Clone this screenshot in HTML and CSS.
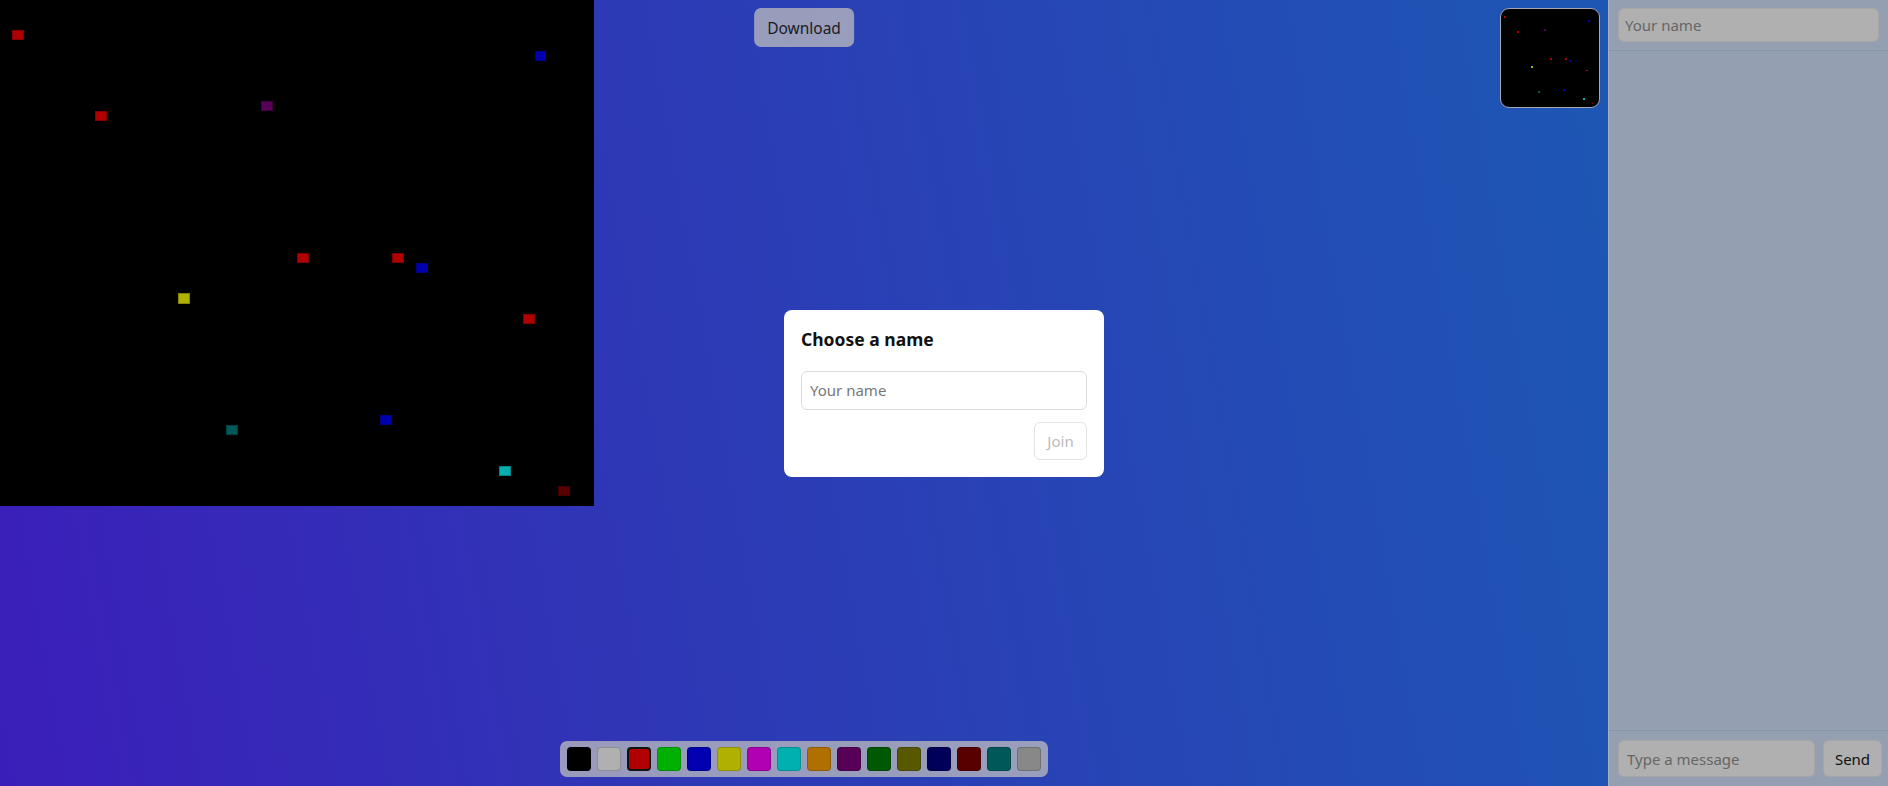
FILE: index.html
```html
<!DOCTYPE html>
<html lang="en">
<head>
<meta charset="utf-8">
<title>Pixel board</title>
<link rel="stylesheet" href="styles.css">
</head>
<body>
<div class="app">
  <main class="stage">
    <div class="board">
      <span class="px red" style="grid-area: 4 / 2"></span>
      <span class="px blue" style="grid-area: 6 / 46"></span>
      <span class="px purple" style="grid-area: 11 / 23"></span>
      <span class="px red" style="grid-area: 12 / 9"></span>
      <span class="px red" style="grid-area: 26 / 26"></span>
      <span class="px red" style="grid-area: 26 / 34"></span>
      <span class="px blue" style="grid-area: 27 / 36"></span>
      <span class="px yellow" style="grid-area: 30 / 16"></span>
      <span class="px red" style="grid-area: 32 / 45"></span>
      <span class="px teal" style="grid-area: 43 / 20"></span>
      <span class="px blue" style="grid-area: 42 / 33"></span>
      <span class="px cyan" style="grid-area: 47 / 43"></span>
      <span class="px maroon" style="grid-area: 49 / 48"></span>
    </div>

    <button class="download" type="button">Download</button>

    <div class="minimap">
      <span class="dot red" style="grid-area: 4 / 2"></span>
      <span class="dot blue" style="grid-area: 6 / 46"></span>
      <span class="dot purple" style="grid-area: 11 / 23"></span>
      <span class="dot red" style="grid-area: 12 / 9"></span>
      <span class="dot red" style="grid-area: 26 / 26"></span>
      <span class="dot red" style="grid-area: 26 / 34"></span>
      <span class="dot blue" style="grid-area: 27 / 36"></span>
      <span class="dot yellow" style="grid-area: 30 / 16"></span>
      <span class="dot red" style="grid-area: 32 / 45"></span>
      <span class="dot teal" style="grid-area: 43 / 20"></span>
      <span class="dot blue" style="grid-area: 42 / 33"></span>
      <span class="dot cyan" style="grid-area: 47 / 43"></span>
      <span class="dot maroon" style="grid-area: 49 / 48"></span>
    </div>

    <div class="palette">
      <button class="swatch black" type="button"></button>
      <button class="swatch silver" type="button"></button>
      <button class="swatch red selected" type="button"></button>
      <button class="swatch green" type="button"></button>
      <button class="swatch blue" type="button"></button>
      <button class="swatch yellow" type="button"></button>
      <button class="swatch magenta" type="button"></button>
      <button class="swatch cyan" type="button"></button>
      <button class="swatch orange" type="button"></button>
      <button class="swatch purple" type="button"></button>
      <button class="swatch darkgreen" type="button"></button>
      <button class="swatch olive" type="button"></button>
      <button class="swatch navy" type="button"></button>
      <button class="swatch maroon" type="button"></button>
      <button class="swatch teal" type="button"></button>
      <button class="swatch gray" type="button"></button>
    </div>
  </main>

  <aside class="sidebar">
    <div class="side-head">
      <input class="side-input name-input" type="text" placeholder="Your name">
    </div>
    <div class="messages"></div>
    <div class="side-foot">
      <input class="side-input msg-input" type="text" placeholder="Type a message">
      <button class="send" type="button">Send</button>
    </div>
  </aside>
</div>

<div class="modal-layer">
  <div class="modal">
    <h3 class="modal-title">Choose a name</h3>
    <input class="modal-input" type="text" placeholder="Your name">
    <div class="modal-actions">
      <button class="join" type="button" disabled>Join</button>
    </div>
  </div>
</div>
</body>
</html>
```

FILE: styles.css
```css
* { box-sizing: border-box; }

html, body {
  margin: 0;
  height: 100%;
}

body {
  font-family: "Noto Sans", "Open Sans", sans-serif;
  font-size: 15px;
  color: #111;
  overflow: hidden;
}

.app {
  display: flex;
  height: 100vh;
}

.stage {
  position: relative;
  flex: 1;
  background: linear-gradient(80deg, #3b1eb9 0%, #2e38b6 40%, #1d57b4 100%);
  overflow: hidden;
}

.board {
  width: 594px;
  height: 506px;
  background: #000;
  display: grid;
  grid-template-columns: repeat(50, 1fr);
  grid-template-rows: repeat(50, 1fr);
}

.px {
  box-shadow: inset 0 0 0 1px rgba(0, 0, 0, 0.25);
}

.red { background: #b00000; }
.blue { background: #0000b0; }
.purple { background: #580058; }
.yellow { background: #b0b000; }
.teal { background: #005858; }
.cyan { background: #00b0b0; }
.maroon { background: #580000; }
.black { background: #000; }
.silver { background: #b0b0b0; }
.green { background: #00b000; }
.magenta { background: #b000b0; }
.orange { background: #b07000; }
.darkgreen { background: #005800; }
.olive { background: #585800; }
.navy { background: #000058; }
.gray { background: #888888; }

.download {
  position: absolute;
  top: 8px;
  left: 50%;
  transform: translateX(-50%);
  height: 39px;
  padding: 0 13px;
  border: none;
  border-radius: 7px;
  background: rgba(190, 190, 190, 0.75);
  color: #1a1a24;
  font-family: inherit;
  font-size: 15.5px;
}

.minimap {
  position: absolute;
  top: 8px;
  right: 8px;
  width: 100px;
  height: 100px;
  padding: 1px;
  border: 1px solid #a3a6b4;
  border-radius: 9px;
  background: #000;
  display: grid;
  grid-template-columns: repeat(50, 1fr);
  grid-template-rows: repeat(50, 1fr);
  overflow: hidden;
}

.palette {
  position: absolute;
  left: 50%;
  bottom: 9px;
  transform: translateX(-50%);
  display: flex;
  gap: 6px;
  padding: 6px 7px;
  border-radius: 7px;
  background: rgba(190, 190, 190, 0.75);
}

.swatch {
  width: 24px;
  height: 24px;
  padding: 0;
  border: 1px solid rgba(0, 0, 0, 0.18);
  border-radius: 4px;
}

.swatch.selected {
  border: 2px solid #111;
}

.sidebar {
  width: 280px;
  display: flex;
  flex-direction: column;
  background: #94a0b2;
  border-left: 1px solid #a6b0c0;
}

.side-head {
  padding: 8px 9px 8px 9px;
  border-bottom: 1px solid #8696aa;
}

.messages {
  flex: 1;
}

.side-foot {
  display: flex;
  gap: 8px;
  padding: 9px 6px 9px 9px;
  border-top: 1px solid #8696aa;
}

.side-input {
  border: 1px solid #a6a6a6;
  border-radius: 6px;
  background: #b0b0b0;
  font-family: inherit;
  font-size: 15px;
  color: #333;
  outline: none;
}

.side-input::placeholder {
  color: #666;
}

.name-input {
  width: 100%;
  height: 34px;
  padding: 0 6px;
}

.msg-input {
  flex: 1;
  min-width: 0;
  width: 0;
  height: 37px;
  padding: 0 8px;
}

.send {
  flex: none;
  width: 59px;
  height: 37px;
  border: 1px solid #a6a6a6;
  border-radius: 6px;
  background: #b0b0b0;
  color: #111;
  font-family: inherit;
  font-size: 15px;
}

.modal-layer {
  position: fixed;
  inset: 0;
  display: flex;
  align-items: center;
  justify-content: center;
}

.modal {
  width: 320px;
  padding: 17px;
  background: #fff;
  border-radius: 8px;
}

.modal-title {
  margin: 0 0 20px;
  font-size: 17.5px;
  line-height: 24px;
  font-weight: 700;
  color: #111;
}

.modal-input {
  display: block;
  width: 100%;
  height: 39px;
  padding: 0 8px;
  border: 1px solid #dcdcdc;
  border-radius: 6px;
  font-family: inherit;
  font-size: 15px;
  outline: none;
}

.modal-input::placeholder {
  color: #777;
}

.modal-actions {
  display: flex;
  justify-content: flex-end;
  margin-top: 12px;
}

.join {
  width: 53px;
  height: 38px;
  border: 1px solid #e3e3e3;
  border-radius: 6px;
  background: #fff;
  color: #bbb;
  font-family: inherit;
  font-size: 15px;
}
```
